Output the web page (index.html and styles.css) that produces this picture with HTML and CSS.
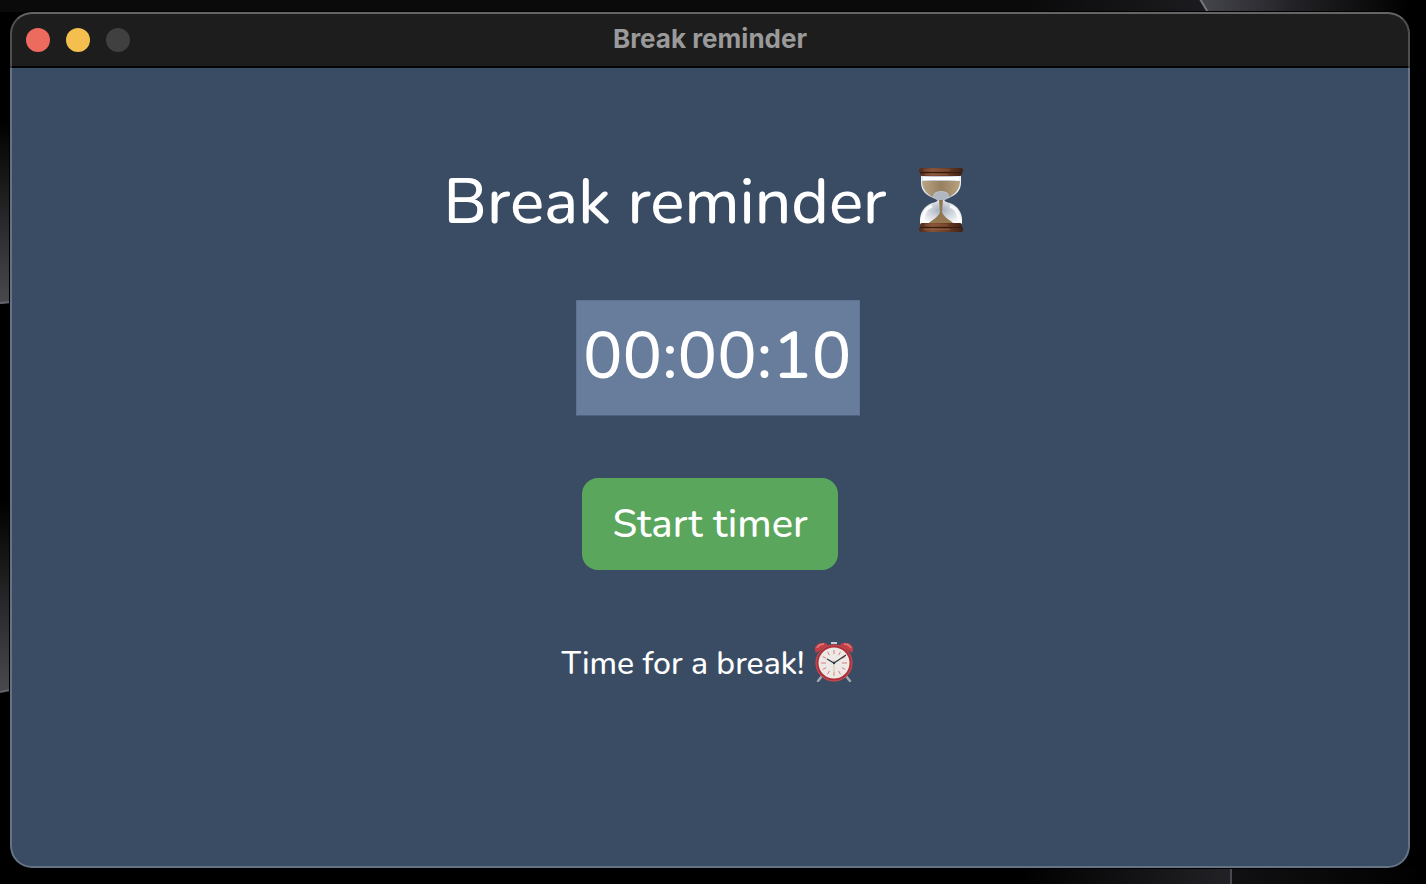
FILE: index.html
```
<!DOCTYPE html>
<html lang="en">
<head>
<meta charset="utf-8">
<title>Break reminder</title>
<link rel="stylesheet" href="styles.css">
</head>
<body>
<svg class="wallpaper" viewBox="0 0 1426 884" preserveAspectRatio="none" aria-hidden="true">
  <defs>
    <linearGradient id="top"><stop offset="0" stop-color="#45454d"/><stop offset=".45" stop-color="#222226"/><stop offset="1" stop-color="#000"/></linearGradient>
    <linearGradient id="topleft"><stop offset="0" stop-color="#0a0a0b"/><stop offset=".85" stop-color="#0a0a0b"/><stop offset="1" stop-color="#1c1c20"/></linearGradient>
    <linearGradient id="side" x2="0" y2="1"><stop offset="0" stop-color="#000"/><stop offset="1" stop-color="#4a4a4e"/></linearGradient>
    <linearGradient id="foot"><stop offset="0" stop-color="#000"/><stop offset="1" stop-color="#222226"/></linearGradient>
    <linearGradient id="footright"><stop offset="0" stop-color="#111113"/><stop offset="1" stop-color="#000"/></linearGradient>
  </defs>
  <path fill="url(#topleft)" d="M0 0H1201L1208 12H0z"/>
  <path fill="url(#top)" d="M1201 0H1410V14H1209z"/>
  <path fill="none" stroke="#77777f" stroke-width="2" d="M1200-1L1209 14"/>
  <path fill="url(#side)" d="M0 120H10V303L0 304z"/>
  <path fill="none" stroke="#62626c" stroke-width="2" d="M0 303L10 302"/>
  <path fill="url(#side)" d="M0 500H10V690L0 692z"/>
  <path fill="none" stroke="#62626c" stroke-width="2" d="M0 692L10 690"/>
  <path fill="url(#foot)" d="M1020 866H1231V884H1020z"/>
  <path fill="url(#footright)" d="M1231 866H1426V884H1231z"/>
  <path fill="none" stroke="#494953" stroke-width="2" d="M1231 866V884"/>
</svg>
<main class="window">
  <header class="titlebar">
    <div class="controls">
      <button class="control close" type="button" aria-label="Close"></button>
      <button class="control minimize" type="button" aria-label="Minimize"></button>
      <button class="control zoom" type="button" aria-label="Zoom" disabled></button>
    </div>
    <div class="titlebar-text">Break reminder</div>
  </header>
  <form class="content">
    <h1 class="heading">
      <span>Break reminder</span>
      <svg class="hourglass" viewBox="0 0 46 66" role="img" aria-label="hourglass">
        <defs>
          <linearGradient id="wood"><stop offset="0" stop-color="#4c2a1a"/><stop offset=".3" stop-color="#875236"/><stop offset=".6" stop-color="#6d3e27"/><stop offset="1" stop-color="#3f2114"/></linearGradient>
          <linearGradient id="glass"><stop offset="0" stop-color="#e9edf2"/><stop offset=".3" stop-color="#bcc4cf"/><stop offset=".7" stop-color="#c5ccd6"/><stop offset="1" stop-color="#f4f6f8"/></linearGradient>
          <linearGradient id="sand"><stop offset="0" stop-color="#b9a583"/><stop offset=".5" stop-color="#978061"/><stop offset="1" stop-color="#b8a27e"/></linearGradient>
          <radialGradient id="shade" cx=".5" cy=".4" r=".6"><stop offset="0" stop-color="#a3adba"/><stop offset=".5" stop-color="#d3d8df"/><stop offset="1" stop-color="#fafbfc"/></radialGradient>
        </defs>
        <path fill="url(#glass)" d="M3 8H43V15C43 24 38 28 31 31Q26 33 26 34H20Q20 33 15 31C8 28 3 24 3 15z"/>
        <path fill="url(#shade)" d="M20 33H26Q27 35 32 36C40 39 44 46 44 53V58H2V53C2 46 6 39 14 36Q19 35 20 33z"/>
        <path fill="#fff" d="M5 10H41V13H5z"/>
        <path fill="url(#sand)" d="M4 14H42C42 22 37 27 31 30Q31 24 23 24Q15 24 15 30C9 27 4 22 4 14z"/>
        <path fill="#aeb5bf" opacity=".9" d="M15 29Q16 25 23 25Q30 25 31 29Q28 32 26 33H20Q17 32 15 29z"/>
        <path fill="#927751" d="M21 33H25L24 45C26 51 33 53 37 58H9C13 53 20 51 22 45z"/>
        <path fill="none" stroke="#fff" stroke-width="3" opacity=".8" d="M5 54C5 46 8 41 14 39M41 54C41 46 38 41 32 39"/>
        <rect x="1" y="1" width="44" height="5" rx="2" fill="url(#wood)"/>
        <rect x="2" y="5" width="42" height="4" rx="2" fill="url(#wood)"/>
        <path stroke="#341c12" d="M2 5.500H44"/>
        <path stroke="#8f5d44" stroke-width=".8" d="M6 3H32M7 7.500H30"/>
        <rect x="2" y="56" width="42" height="5" rx="2" fill="url(#wood)"/>
        <rect x="1" y="60" width="44" height="5" rx="2" fill="url(#wood)"/>
        <path stroke="#341c12" d="M2 60.500H44"/>
        <path stroke="#8f5d44" stroke-width=".8" d="M7 58H30M6 62.500H32"/>
      </svg>
    </h1>
    <input class="time" type="text" value="00:00:10" aria-label="Timer duration">
    <button class="start" type="button">Start timer</button>
    <p class="message">
      <span>Time for a break!</span>
      <svg class="clock" viewBox="0 0 40 40" role="img" aria-label="alarm clock">
        <path stroke="#a4a9ae" stroke-width="2.4" stroke-linecap="round" d="M8 34L4 39M32 34L36 39"/>
        <path fill="#c9cdd0" d="M17 0H23V2H17z"/>
        <path fill="#c43e46" d="M2 11C-1 6 2 2 7 1Q12 0 14 3zM38 11C41 6 38 2 33 1Q28 0 26 3z"/>
        <path fill="none" stroke="#e27a80" stroke-width="1.5" d="M3 6Q5 2 10 2M30 2Q35 2 37 6"/>
        <circle cx="20" cy="21" r="17" fill="#ece9e7" stroke="#ad2f37" stroke-width="3"/>
        <circle cx="20" cy="21" r="18" fill="none" stroke="#cf5a61" stroke-width=".8"/>
        <path stroke="#df7a7e" stroke-width="1" d="M20 8V12M20 30V34M7 21H12M28 21H33M13.500 9.700L15.500 13.200M26.500 9.700L24.500 13.200M8.700 14.500L12.200 16.500M31.300 14.500L27.800 16.500M8.700 27.500L12.200 25.500M31.300 27.500L27.800 25.500M13.500 32.300L15.500 28.800M26.500 32.300L24.500 28.800"/>
        <path stroke="#d8c5a4" d="M20 18V34"/>
        <path fill="none" stroke="#30363b" stroke-width="1.2" d="M13 17L20 21L32 13"/>
        <circle cx="20" cy="21" r="1.200" fill="#30363b"/>
      </svg>
    </p>
  </form>
</main>
</body>
</html>
```
FILE: styles.css
```
* { box-sizing: border-box; }

body {
  margin: 0;
  min-height: 100vh;
  display: flex;
  padding: 12px 16px 16px 10px;
  background: #000;
  color: #fff;
  font-family: Nunito, Lato, sans-serif;
  font-weight: 500;
}

.wallpaper {
  position: absolute;
  inset: 0;
  width: 100%;
  height: 100%;
}

.window {
  position: relative;
  flex: 1;
  display: flex;
  flex-direction: column;
  overflow: hidden;
  border-radius: 22px;
  background: #3a4c63;
  box-shadow: 0 0 0 1px #000;
}

.window::after {
  content: "";
  position: absolute;
  inset: 0;
  border: 2px solid rgba(255, 255, 255, 0.22);
  border-top-color: rgba(255, 255, 255, 0.32);
  border-radius: 22px;
  pointer-events: none;
}

.titlebar {
  display: grid;
  grid-template-columns: 1fr auto 1fr;
  align-items: center;
  height: 56px;
  padding: 2px 16px 0;
  background: #1d1d1d;
  border-bottom: 2px solid #050505;
}

.controls { display: flex; gap: 16px; }

.control {
  width: 24px;
  height: 24px;
  padding: 0;
  border: 0;
  border-radius: 50%;
}

.close { background: #ed6a5e; }
.minimize { background: #f5bf4f; }
.zoom { background: #404040; }

.titlebar-text {
  padding-bottom: 2px;
  color: #9a9a9a;
  font: bold 26px/32px Inter, sans-serif;
}

.content {
  display: flex;
  flex-direction: column;
  align-items: center;
  padding: 86px 24px 24px;
}

.heading {
  display: flex;
  align-items: center;
  gap: 32px;
  margin: 0 12px 0 0;
  font-size: 64px;
  line-height: 88px;
  font-weight: 500;
}

.heading span { padding-top: 4px; }

.hourglass { width: 46px; height: 66px; }

.time {
  width: 284px;
  height: 116px;
  margin: 54px 0 0 16px;
  padding: 0 6px 4px;
  border: 1px solid #5f7392;
  border-bottom-color: #4d607d;
  border-radius: 0;
  background: #687c9b;
  color: #fff;
  font: 500 66px/80px Nunito, Lato, sans-serif;
}

.start {
  margin-top: 62px;
  padding: 22px 30px;
  border: 0;
  border-radius: 16px;
  background: #5aa65c;
  color: #fff;
  font: 500 40px/48px Nunito, Lato, sans-serif;
}

.message {
  display: flex;
  align-items: center;
  gap: 10px;
  margin: 70px 4px 0 0;
  font-size: 32px;
  line-height: 40px;
}

.message span { padding-top: 4px; }

.clock { width: 40px; height: 40px; }
```
